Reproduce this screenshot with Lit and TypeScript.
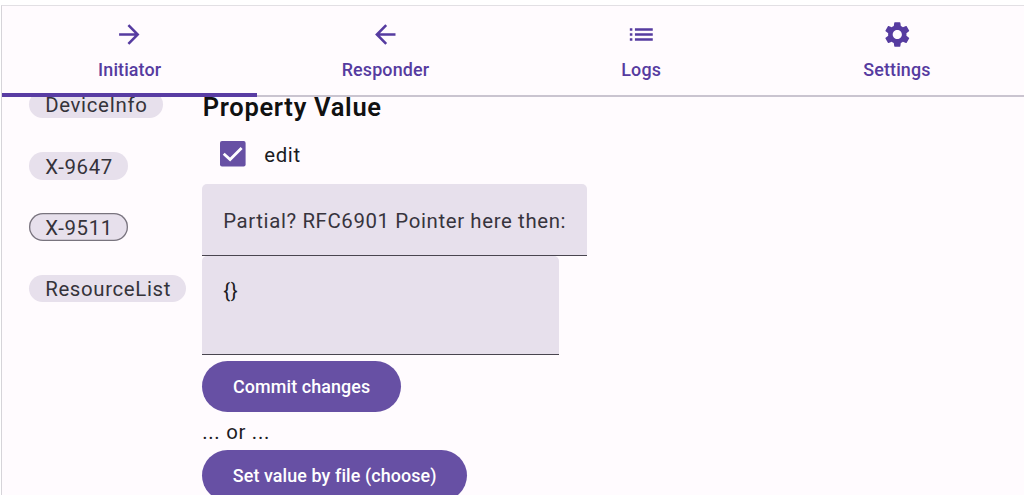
import { LitElement, html, css, svg } from "lit";
import { customElement, property } from "lit/decorators.js";

const icons = {
  forward: svg`<path d="M12 4l-1.41 1.41L16.17 11H4v2h12.17l-5.58 5.59L12 20l8-8z"/>`,
  back: svg`<path d="M20 11H7.83l5.59-5.59L12 4l-8 8 8 8 1.41-1.41L7.83 13H20v-2z"/>`,
  list: svg`<path d="M3 13h2v-2H3v2zm0 4h2v-2H3v2zm0-8h2V7H3v2zm4 4h14v-2H7v2zm0 4h14v-2H7v2zM7 7v2h14V7H7z"/>`,
  settings: svg`<path d="M19.14 12.94c.04-.3.06-.61.06-.94 0-.32-.02-.64-.07-.94l2.03-1.58c.18-.14.23-.41.12-.61l-1.92-3.32c-.12-.22-.37-.29-.59-.22l-2.39.96c-.5-.38-1.03-.7-1.62-.94l-.36-2.54c-.04-.24-.24-.41-.48-.41h-3.84c-.24 0-.43.17-.47.41l-.36 2.54c-.59.24-1.13.57-1.62.94l-2.39-.96c-.22-.08-.47 0-.59.22L2.74 8.87c-.12.21-.08.47.12.61l2.03 1.58c-.05.3-.09.63-.09.94s.02.64.07.94l-2.03 1.58c-.18.14-.23.41-.12.61l1.92 3.32c.12.22.37.29.59.22l2.39-.96c.5.38 1.03.7 1.62.94l.36 2.54c.05.24.24.41.48.41h3.84c.24 0 .44-.17.47-.41l.36-2.54c.59-.24 1.13-.56 1.62-.94l2.39.96c.22.08.47 0 .59-.22l1.92-3.32c.12-.22.07-.47-.12-.61l-2.01-1.58zM12 15.6c-1.98 0-3.6-1.62-3.6-3.6s1.62-3.6 3.6-3.6 3.6 1.62 3.6 3.6-1.62 3.6-3.6 3.6z"/>`,
};

@customElement("nav-tab")
class NavTab extends LitElement {
  @property() icon: keyof typeof icons = "forward";
  @property() label = "";

  static styles = css`
    :host {
      flex: 1;
      display: flex;
      flex-direction: column;
      align-items: center;
      box-sizing: border-box;
      height: 91px;
      padding: 13px 0 0 1.6px;
      border-bottom: 2px solid #cac4d0;
      color: #563ba0;
      font-weight: 500;
      font-size: 17.9px;
      line-height: 25px;
      letter-spacing: 0.13px;
    }
    :host([selected]) {
      border-bottom: 4px solid #593ca3;
    }
    svg {
      width: 30.6px;
      height: 31px;
      fill: currentColor;
      margin-bottom: 6.5px;
    }
  `;

  render() {
    return html`<svg viewBox="0 0 24 24">${icons[this.icon]}</svg><span>${this.label}</span>`;
  }
}

@customElement("app-root")
class AppRoot extends LitElement {
  static styles = css`
    :host {
      display: block;
      box-sizing: border-box;
      height: 500px;
      padding: 5px 0 5px 1px;
      background: #fff;
      font-family: Roboto, sans-serif;
      overflow: hidden;
    }
    .window {
      display: flex;
      flex-direction: column;
      box-sizing: border-box;
      height: 490px;
      border-top: 1px solid #e2e0e4;
      border-left: 1px solid #d6d4d9;
      background: #fffbfe;
      overflow: hidden;
    }
    .tabs {
      display: flex;
      flex: none;
      margin-left: -1px;
    }
    .body {
      display: grid;
      grid-template-columns: 172.8px 1fr;
      flex: 1;
      min-height: 0;
      padding-left: 27.4px;
      overflow: hidden;
      color: #1c1b1f;
      font-size: 20.4px;
      line-height: 27px;
      letter-spacing: 0.64px;
    }
    .chips {
      display: flex;
      flex-direction: column;
      align-items: flex-start;
      gap: 33.6px;
      margin-top: -6.3px;
    }
    .chip {
      box-sizing: border-box;
      height: 27.7px;
      padding: 1.7px 15px 0 15.8px;
      border-radius: 14px;
      background: #e7e0ec;
      color: #35333a;
      white-space: nowrap;
    }
    .chip.selected {
      box-shadow: inset 0 0 0 1.3px #79747e;
    }
    .detail {
      display: flex;
      flex-direction: column;
      align-items: flex-start;
    }
    h2 {
      margin: -5px 0 0 0.5px;
      font-size: 25.5px;
      font-weight: 600;
      line-height: 30px;
      letter-spacing: 0.7px;
      color: #111;
    }
    .check-row {
      display: flex;
      align-items: flex-start;
      gap: 18px;
      height: 27px;
      margin: 19px 0 0 18px;
    }
    .check-row span {
      padding-top: 1px;
    }
    .check {
      width: 26px;
      height: 26px;
    }
    .field {
      box-sizing: border-box;
      padding: 22px 21px;
      border-bottom: 1px solid #49454f;
      border-radius: 5px 5px 0 0;
      background: #e7e0ec;
    }
    .pointer {
      width: 385px;
      height: 72px;
      margin-top: 16px;
      padding-top: 24px;
      color: #37343d;
      letter-spacing: 0.62px;
      white-space: nowrap;
    }
    .json {
      width: 357px;
      height: 99px;
    }
    .button {
      display: flex;
      align-items: center;
      justify-content: center;
      flex: none;
      box-sizing: border-box;
      height: 51px;
      padding: 1px 0 0;
      border: 0;
      border-radius: 26px;
      background: #6750a4;
      color: #fff;
      font: 500 17.9px/25px Roboto, sans-serif;
      letter-spacing: 0.1px;
      white-space: nowrap;
    }
    .commit {
      width: 199px;
      margin-top: 5.5px;
    }
    .choose {
      width: 265px;
    }
    .or {
      margin: 7px 0 4px;
      letter-spacing: 0.7px;
    }
  `;

  render() {
    return html`
      <div class="window">
        <nav class="tabs">
          <nav-tab selected icon="forward" label="Initiator"></nav-tab>
          <nav-tab icon="back" label="Responder"></nav-tab>
          <nav-tab icon="list" label="Logs"></nav-tab>
          <nav-tab icon="settings" label="Settings"></nav-tab>
        </nav>
        <main class="body">
          <div class="chips">
            ${["DeviceInfo", "X-9647", "X-9511", "ResourceList"].map(
              (name) => html`<span class="chip ${name === "X-9511" ? "selected" : ""}">${name}</span>`
            )}
          </div>
          <section class="detail">
            <h2>Property Value</h2>
            <div class="check-row">
              <svg class="check" viewBox="0 0 26 26">
                <rect width="25.6" height="25.6" rx="2" fill="#6750a4" />
                <path d="M3.7 12.7L10.1 18.6L21.6 7" fill="none" stroke="#fff" stroke-width="2.8" />
              </svg>
              <span>edit</span>
            </div>
            <div class="field pointer">Partial? RFC6901 Pointer here then:</div>
            <div class="field json">{}</div>
            <button class="button commit">Commit changes</button>
            <div class="or">... or ...</div>
            <button class="button choose">Set value by file (choose)</button>
          </section>
        </main>
      </div>
    `;
  }
}
